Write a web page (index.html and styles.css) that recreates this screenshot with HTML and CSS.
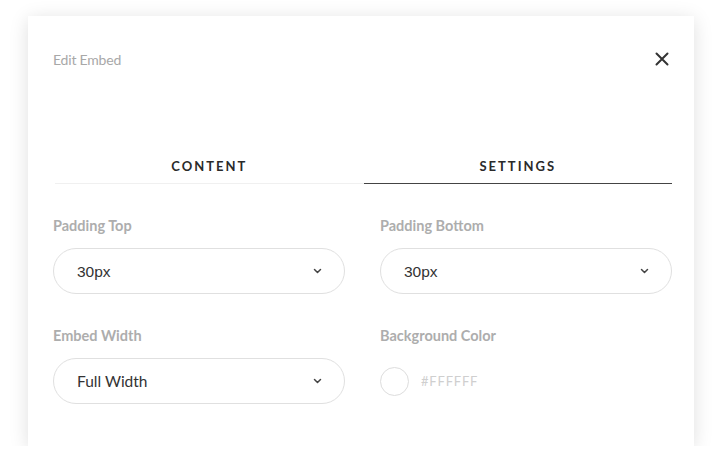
FILE: index.html
```html
<!DOCTYPE html>
<html>
<head>
<meta charset="utf-8">
<link rel="stylesheet" href="styles.css">
</head>
<body>
<div class="modal">
  <div class="header">
    <span class="title">Edit Embed</span>
    <svg class="close" width="14" height="14" viewBox="0 0 14 14"><path d="M1.5 1.5 L12.5 12.5 M12.5 1.5 L1.5 12.5" stroke="#333" stroke-width="2" stroke-linecap="round"/></svg>
  </div>
  <div class="tabs">
    <div class="tab">CONTENT</div>
    <div class="tab active">SETTINGS</div>
  </div>
  <div class="grid">
    <div class="field">
      <div class="label">Padding Top</div>
      <div class="select"><span class="val arial">30px</span><svg class="chev" width="9" height="6" viewBox="0 0 9 6"><path d="M1.5 1.5 L4.5 4.5 L7.5 1.5" fill="none" stroke="#444" stroke-width="1.5" stroke-linecap="round" stroke-linejoin="round"/></svg></div>
    </div>
    <div class="field">
      <div class="label">Padding Bottom</div>
      <div class="select"><span class="val arial">30px</span><svg class="chev" width="9" height="6" viewBox="0 0 9 6"><path d="M1.5 1.5 L4.5 4.5 L7.5 1.5" fill="none" stroke="#444" stroke-width="1.5" stroke-linecap="round" stroke-linejoin="round"/></svg></div>
    </div>
    <div class="field">
      <div class="label">Embed Width</div>
      <div class="select"><span class="val">Full Width</span><svg class="chev" width="9" height="6" viewBox="0 0 9 6"><path d="M1.5 1.5 L4.5 4.5 L7.5 1.5" fill="none" stroke="#444" stroke-width="1.5" stroke-linecap="round" stroke-linejoin="round"/></svg></div>
    </div>
    <div class="field">
      <div class="label">Background Color</div>
      <div class="color"><span class="swatch"></span><span class="hex">#FFFFFF</span></div>
    </div>
  </div>
</div>
</body>
</html>
```

FILE: styles.css
```css
html, body {
  margin: 0;
  padding: 0;
  background: #fff;
}
body {
  padding: 16px 27px 0 28px;
  font-family: Lato, "Open Sans", sans-serif;
}
.modal {
  width: 666px;
  height: 430px;
  box-sizing: border-box;
  background: #fff;
  box-shadow: 0 3px 18px rgba(0,0,0,0.13);
  padding: 0 22px 0 25px;
}
.header {
  display: flex;
  justify-content: space-between;
  align-items: center;
  padding-top: 34px;
  height: 18px;
}
.title {
  font-size: 14px;
  color: #a8a8a8;
  letter-spacing: -0.2px;
}
.close {
  margin-right: 3px;
}
.tabs {
  display: flex;
  margin-top: 90px;
  padding-left: 2px;
}
.tab {
  flex: 1;
  text-align: center;
  font-size: 13px;
  font-weight: 700;
  letter-spacing: 2px;
  color: #2a2a2a;
  padding-bottom: 9px;
  border-bottom: 1px solid #f0f0f0;
}
.tab.active {
  border-bottom: 1px solid #444;
}
.grid {
  display: grid;
  grid-template-columns: 292px 292px;
  column-gap: 35px;
  row-gap: 34px;
  margin-top: 34px;
}
.label {
  font-size: 14.5px;
  font-weight: 700;
  color: #adadad;
  height: 16px;
  line-height: 16px;
}
.select {
  margin-top: 14px;
  height: 46px;
  box-sizing: border-box;
  border: 1px solid #e0e0e0;
  border-radius: 23px;
  display: flex;
  align-items: center;
  justify-content: space-between;
  padding: 0 22px 0 23px;
}
.val {
  font-size: 15.5px;
  color: #333;
}
.val.arial {
  font-family: "Liberation Sans", Arial, sans-serif;
  padding-top: 2px;
}
.color {
  margin-top: 14px;
  height: 46px;
  display: flex;
  align-items: center;
}
.swatch {
  width: 29px;
  height: 29px;
  box-sizing: border-box;
  border: 1px solid #ddd;
  border-radius: 50%;
  background: #fff;
}
.hex {
  margin-left: 12px;
  font-size: 13px;
  color: #cfcfcf;
  letter-spacing: 0.8px;
}
```
